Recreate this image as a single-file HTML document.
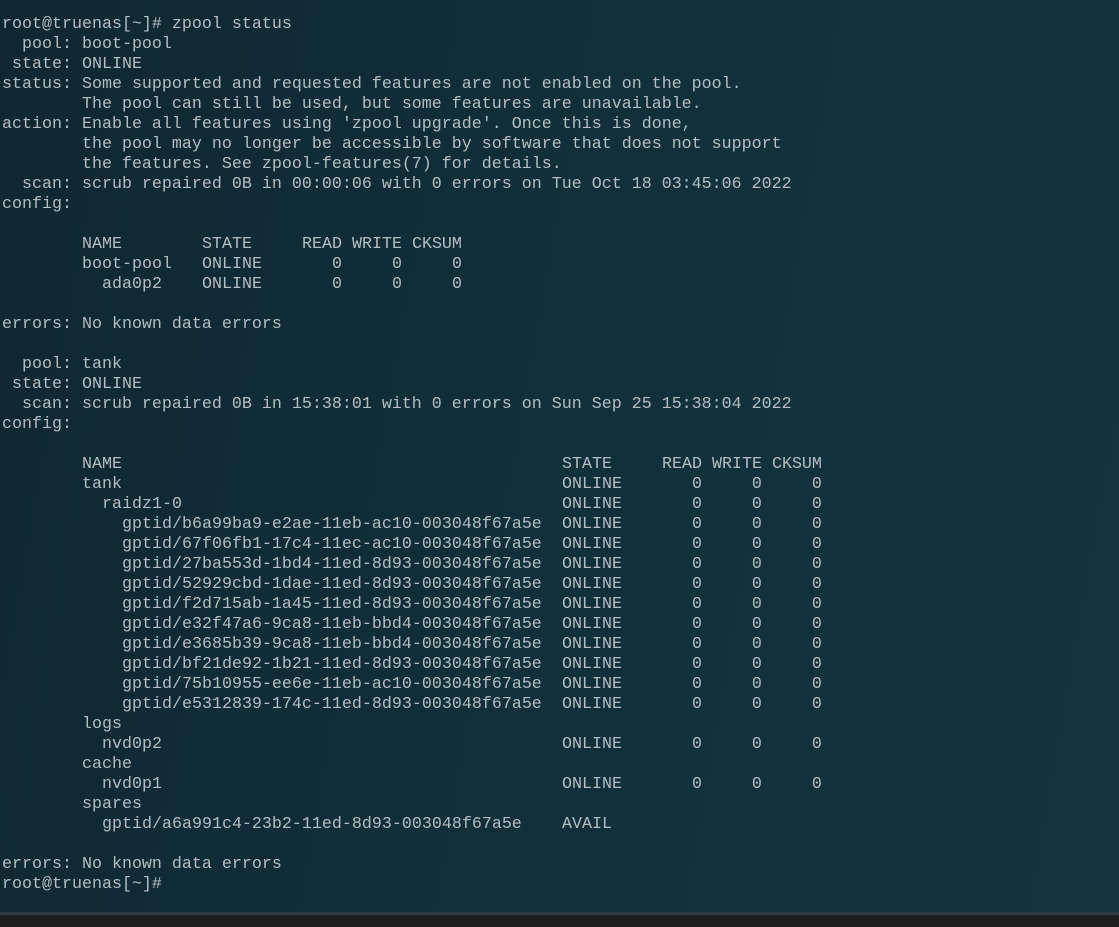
<!DOCTYPE html>
<html><head><meta charset="utf-8"><style>
html,body{margin:0;padding:0;}
body{width:1119px;height:927px;overflow:hidden;position:relative;
background:linear-gradient(100deg,#0f2731 0%,#11303a 50%,#12343f 100%);
font-family:"Liberation Mono",monospace;font-size:16.667px;color:#b3bec2;}
.t{position:absolute;left:2px;top:15px;}
.l{position:relative;height:20px;line-height:20px;white-space:pre;width:1100px;}
.c{position:absolute;top:0;}
.bar{position:absolute;left:0;top:912px;width:1119px;height:3px;background:#363a44;}
.bot{position:absolute;left:0;top:915px;width:1119px;height:12px;background:#1e1e1e;}
</style></head><body>
<div class="t">
<div class="l">root@truenas[~]# zpool status</div>
<div class="l">  pool: boot-pool</div>
<div class="l"> state: ONLINE</div>
<div class="l">status: Some supported and requested features are not enabled on the pool.</div>
<div class="l">        The pool can still be used, but some features are unavailable.</div>
<div class="l">action: Enable all features using 'zpool upgrade'. Once this is done,</div>
<div class="l">        the pool may no longer be accessible by software that does not support</div>
<div class="l">        the features. See zpool-features(7) for details.</div>
<div class="l">  scan: scrub repaired 0B in 00:00:06 with 0 errors on Tue Oct 18 03:45:06 2022</div>
<div class="l">config:</div>
<div class="l"> </div>
<div class="l"><span class="c" style="left:80px">NAME</span><span class="c" style="left:200px">STATE</span><span class="c" style="left:300px">READ WRITE CKSUM</span></div>
<div class="l"><span class="c" style="left:80px">boot-pool</span><span class="c" style="left:200px">ONLINE</span><span class="c" style="left:330px">0</span><span class="c" style="left:390px">0</span><span class="c" style="left:450px">0</span></div>
<div class="l"><span class="c" style="left:100px">ada0p2</span><span class="c" style="left:200px">ONLINE</span><span class="c" style="left:330px">0</span><span class="c" style="left:390px">0</span><span class="c" style="left:450px">0</span></div>
<div class="l"> </div>
<div class="l">errors: No known data errors</div>
<div class="l"> </div>
<div class="l">  pool: tank</div>
<div class="l"> state: ONLINE</div>
<div class="l">  scan: scrub repaired 0B in 15:38:01 with 0 errors on Sun Sep 25 15:38:04 2022</div>
<div class="l">config:</div>
<div class="l"> </div>
<div class="l"><span class="c" style="left:80px">NAME</span><span class="c" style="left:560px">STATE</span><span class="c" style="left:660px">READ WRITE CKSUM</span></div>
<div class="l"><span class="c" style="left:80px">tank</span><span class="c" style="left:560px">ONLINE       0     0     0</span></div>
<div class="l"><span class="c" style="left:100px">raidz1-0</span><span class="c" style="left:560px">ONLINE       0     0     0</span></div>
<div class="l"><span class="c" style="left:120px">gptid/b6a99ba9-e2ae-11eb-ac10-003048f67a5e</span><span class="c" style="left:560px">ONLINE       0     0     0</span></div>
<div class="l"><span class="c" style="left:120px">gptid/67f06fb1-17c4-11ec-ac10-003048f67a5e</span><span class="c" style="left:560px">ONLINE       0     0     0</span></div>
<div class="l"><span class="c" style="left:120px">gptid/27ba553d-1bd4-11ed-8d93-003048f67a5e</span><span class="c" style="left:560px">ONLINE       0     0     0</span></div>
<div class="l"><span class="c" style="left:120px">gptid/52929cbd-1dae-11ed-8d93-003048f67a5e</span><span class="c" style="left:560px">ONLINE       0     0     0</span></div>
<div class="l"><span class="c" style="left:120px">gptid/f2d715ab-1a45-11ed-8d93-003048f67a5e</span><span class="c" style="left:560px">ONLINE       0     0     0</span></div>
<div class="l"><span class="c" style="left:120px">gptid/e32f47a6-9ca8-11eb-bbd4-003048f67a5e</span><span class="c" style="left:560px">ONLINE       0     0     0</span></div>
<div class="l"><span class="c" style="left:120px">gptid/e3685b39-9ca8-11eb-bbd4-003048f67a5e</span><span class="c" style="left:560px">ONLINE       0     0     0</span></div>
<div class="l"><span class="c" style="left:120px">gptid/bf21de92-1b21-11ed-8d93-003048f67a5e</span><span class="c" style="left:560px">ONLINE       0     0     0</span></div>
<div class="l"><span class="c" style="left:120px">gptid/75b10955-ee6e-11eb-ac10-003048f67a5e</span><span class="c" style="left:560px">ONLINE       0     0     0</span></div>
<div class="l"><span class="c" style="left:120px">gptid/e5312839-174c-11ed-8d93-003048f67a5e</span><span class="c" style="left:560px">ONLINE       0     0     0</span></div>
<div class="l"><span class="c" style="left:80px">logs</span></div>
<div class="l"><span class="c" style="left:100px">nvd0p2</span><span class="c" style="left:560px">ONLINE       0     0     0</span></div>
<div class="l"><span class="c" style="left:80px">cache</span></div>
<div class="l"><span class="c" style="left:100px">nvd0p1</span><span class="c" style="left:560px">ONLINE       0     0     0</span></div>
<div class="l"><span class="c" style="left:80px">spares</span></div>
<div class="l"><span class="c" style="left:100px">gptid/a6a991c4-23b2-11ed-8d93-003048f67a5e</span><span class="c" style="left:560px">AVAIL</span></div>
<div class="l"> </div>
<div class="l">errors: No known data errors</div>
<div class="l">root@truenas[~]# </div>
</div>
<div class="bar"></div><div class="bot"></div>
</body></html>
